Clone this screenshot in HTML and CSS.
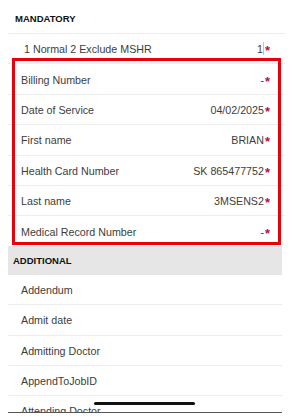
FILE: index.html
```html
<!DOCTYPE html>
<html lang="en">
<head>
  <meta charset="UTF-8" />
  <meta name="viewport" content="width=device-width, initial-scale=1.0" />
  <title>Fields</title>
  <link rel="stylesheet" href="styles.css">
</head>
<body>
  <div class="screen">
    <div class="list">
      <h2 class="section-title">MANDATORY</h2>
      <div class="row first">
        <span>1 Normal 2 Exclude MSHR</span>
        <span class="value">1<i class="caret"></i><b class="req">*</b></span>
      </div>
      <div class="row"><span>Billing Number</span><span class="value">-<b class="req">*</b></span></div>
      <div class="row"><span>Date of Service</span><span class="value">04/02/2025<b class="req">*</b></span></div>
      <div class="row"><span>First name</span><span class="value">BRIAN<b class="req">*</b></span></div>
      <div class="row"><span>Health Card Number</span><span class="value">SK 865477752<b class="req">*</b></span></div>
      <div class="row"><span>Last name</span><span class="value">3MSENS2<b class="req">*</b></span></div>
      <div class="row"><span>Medical Record Number</span><span class="value">-<b class="req">*</b></span></div>
    </div>

    <div class="list additional">
      <h2 class="section-title gray">ADDITIONAL</h2>
      <div class="row"><span>Addendum</span></div>
      <div class="row"><span>Admit date</span></div>
      <div class="row"><span>Admitting Doctor</span></div>
      <div class="row"><span>AppendToJobID</span></div>
      <div class="row"><span>Attending Doctor</span></div>
    </div>

    <div class="highlight"></div>
    <div class="toolbar"></div>
    <div class="home-bar"></div>
  </div>
</body>
</html>
```

FILE: styles.css
```css
* { box-sizing: border-box; }
html, body {
  margin: 0;
  padding: 0;
  background: #fff;
  overflow: hidden;
}
body {
  font-family: 'Liberation Sans', Arial, sans-serif;
  color: #3d3d3d;
}
.screen {
  position: relative;
  width: 298px;
  height: 417px;
  overflow: hidden;
}
.list {
  margin: 0 13px 0 8px;
}
.section-title {
  margin: 0;
  font-size: 9.5px;
  font-weight: bold;
  color: #111;
  line-height: 12px;
  padding: 13px 0 8px 7px;
}
.row {
  display: flex;
  justify-content: space-between;
  align-items: center;
  height: 30.4px;
  padding: 1px 15px 0 13px;
  border-top: 1px solid #ececec;
  font-size: 10.7px;
  white-space: nowrap;
}
.row.first { padding-left: 16px; padding-top: 0; }
.value { display: flex; align-items: center; }
.caret {
  display: inline-block;
  width: 1px;
  height: 13px;
  background: #a9c7f5;
}
.req {
  color: #b3123a;
  font-size: 13px;
  line-height: 10px;
  position: relative;
  top: 2px;
  margin-left: 1px;
}
.additional {
  margin-right: 16px;
}
.section-title.gray {
  background: #e6e6e6;
  padding: 9px 0 8px 5px;
}
.additional .row {
  border-top: none;
  border-bottom: 1px solid #ececec;
}
.highlight {
  position: absolute;
  left: 12px;
  top: 58px;
  width: 269px;
  height: 187px;
  border: 3px solid #e8000b;
}
.toolbar {
  position: absolute;
  left: 8px;
  right: 16px;
  top: 412px;
  height: 6px;
  background: #fff;
  border-top: 1px solid #555;
}
.home-bar {
  position: absolute;
  left: 94px;
  top: 402px;
  width: 101px;
  height: 3px;
  border-radius: 2px;
  background: #111;
}
```
